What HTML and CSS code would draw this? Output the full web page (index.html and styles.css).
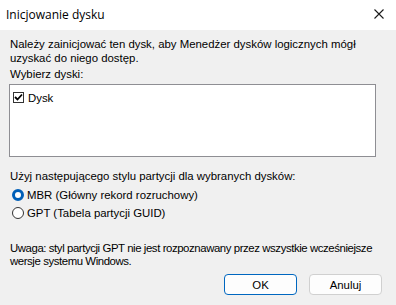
FILE: index.html
```html
<!DOCTYPE html>
<html lang="pl">
<head>
    <meta charset="UTF-8">
    <title>Inicjowanie dysku</title>
    <link rel="stylesheet" href="styles.css">
</head>
<body>
    <div class="dialog">
        <!-- Title bar -->
        <div class="titlebar">
            <span class="title">Inicjowanie dysku</span>
            <button class="close-btn" aria-label="Zamknij">
                <svg width="10" height="10" viewBox="0 0 10 10">
                    <path d="M0.5 0.5 L9.5 9.5 M9.5 0.5 L0.5 9.5" stroke="#1a1a1a" stroke-width="1.1" fill="none"/>
                </svg>
            </button>
        </div>

        <div class="content">
            <p class="intro">Należy zainicjować ten dysk, aby Menedżer dysków logicznych mógł<br>uzyskać do niego dostęp.</p>
            <p class="label">Wybierz dyski:</p>

            <div class="listbox">
                <div class="list-item">
                    <span class="checkbox">
                        <svg width="9" height="9" viewBox="0 0 9 9">
                            <path d="M1 4 L3.5 6.5 L8 1.5" stroke="#000" stroke-width="1.8" fill="none"/>
                        </svg>
                    </span>
                    <span>Dysk</span>
                </div>
            </div>

            <p class="label style-label">Użyj następującego stylu partycji dla wybranych dysków:</p>
            <div class="radio-row">
                <span class="radio checked"></span>
                <span>MBR (Główny rekord rozruchowy)</span>
            </div>
            <div class="radio-row">
                <span class="radio"></span>
                <span>GPT (Tabela partycji GUID)</span>
            </div>

            <p class="note">Uwaga: styl partycji GPT nie jest rozpoznawany przez wszystkie wcześniejsze<br>wersje systemu Windows.</p>

            <div class="buttons">
                <button class="btn btn-default">OK</button>
                <button class="btn">Anuluj</button>
            </div>
        </div>
    </div>
</body>
</html>
```

FILE: styles.css
```css
body {
    margin: 0;
    padding: 0;
    background-color: #f0f0f0;
    font-family: 'Liberation Sans', Arial, sans-serif;
    font-size: 11.4px;
    color: #000000;
}

.dialog {
    width: 396px;
    height: 305px;
    display: flex;
    flex-direction: column;
    background-color: #f0f0f0;
}

.titlebar {
    height: 30px;
    background-color: #ffffff;
    display: flex;
    align-items: center;
    justify-content: space-between;
    padding-left: 6px;
}

.title {
    font-family: 'Open Sans', 'Noto Sans', sans-serif;
    font-size: 12px;
    color: #000000;
    margin-top: -1px;
}

.close-btn {
    width: 46px;
    height: 29px;
    border: none;
    background: transparent;
    display: flex;
    align-items: center;
    justify-content: center;
    padding: 0;
    margin-top: -2px;
    margin-right: -6px;
}

.content {
    padding: 7px 15px 0 10px;
}

p {
    margin: 0;
    line-height: 14px;
    white-space: nowrap;
}

.intro {
    margin-bottom: 2px;
}

.listbox {
    box-sizing: border-box;
    height: 73px;
    margin: 3px 5px 0 -1px;
    border: 1px solid #8e8e93;
    background-color: #ffffff;
    padding: 6px 2px;
}

.list-item {
    display: flex;
    align-items: center;
    gap: 4px;
    height: 13px;
    padding-left: 1px;
}

.checkbox {
    width: 11px;
    height: 11px;
    box-sizing: border-box;
    border: 1px solid #333333;
    background-color: #ffffff;
    display: flex;
    align-items: center;
    justify-content: center;
}

.style-label {
    margin-top: 12px;
    margin-bottom: 3px;
}

.radio-row {
    display: flex;
    align-items: center;
    gap: 3px;
    height: 18px;
    margin-left: 2px;
}

.radio {
    width: 12px;
    height: 12px;
    box-sizing: border-box;
    border: 1px solid #333333;
    border-radius: 50%;
    background-color: #ffffff;
}

.radio.checked {
    border: 3.5px solid #005fb8;
}

.note {
    margin-top: 20px;
    line-height: 13px;
    letter-spacing: -0.42px;
}

.buttons {
    display: flex;
    justify-content: flex-end;
    gap: 12px;
    margin-top: 6px;
    margin-right: -1px;
}

.btn {
    width: 73px;
    height: 21px;
    background-color: #fdfdfd;
    border: 1px solid #d0d0d0;
    border-radius: 4px;
    font-family: 'Liberation Sans', Arial, sans-serif;
    font-size: 11.4px;
    color: #000000;
    padding: 0;
}

.btn-default {
    border: 1px solid #0067c0;
}
```
